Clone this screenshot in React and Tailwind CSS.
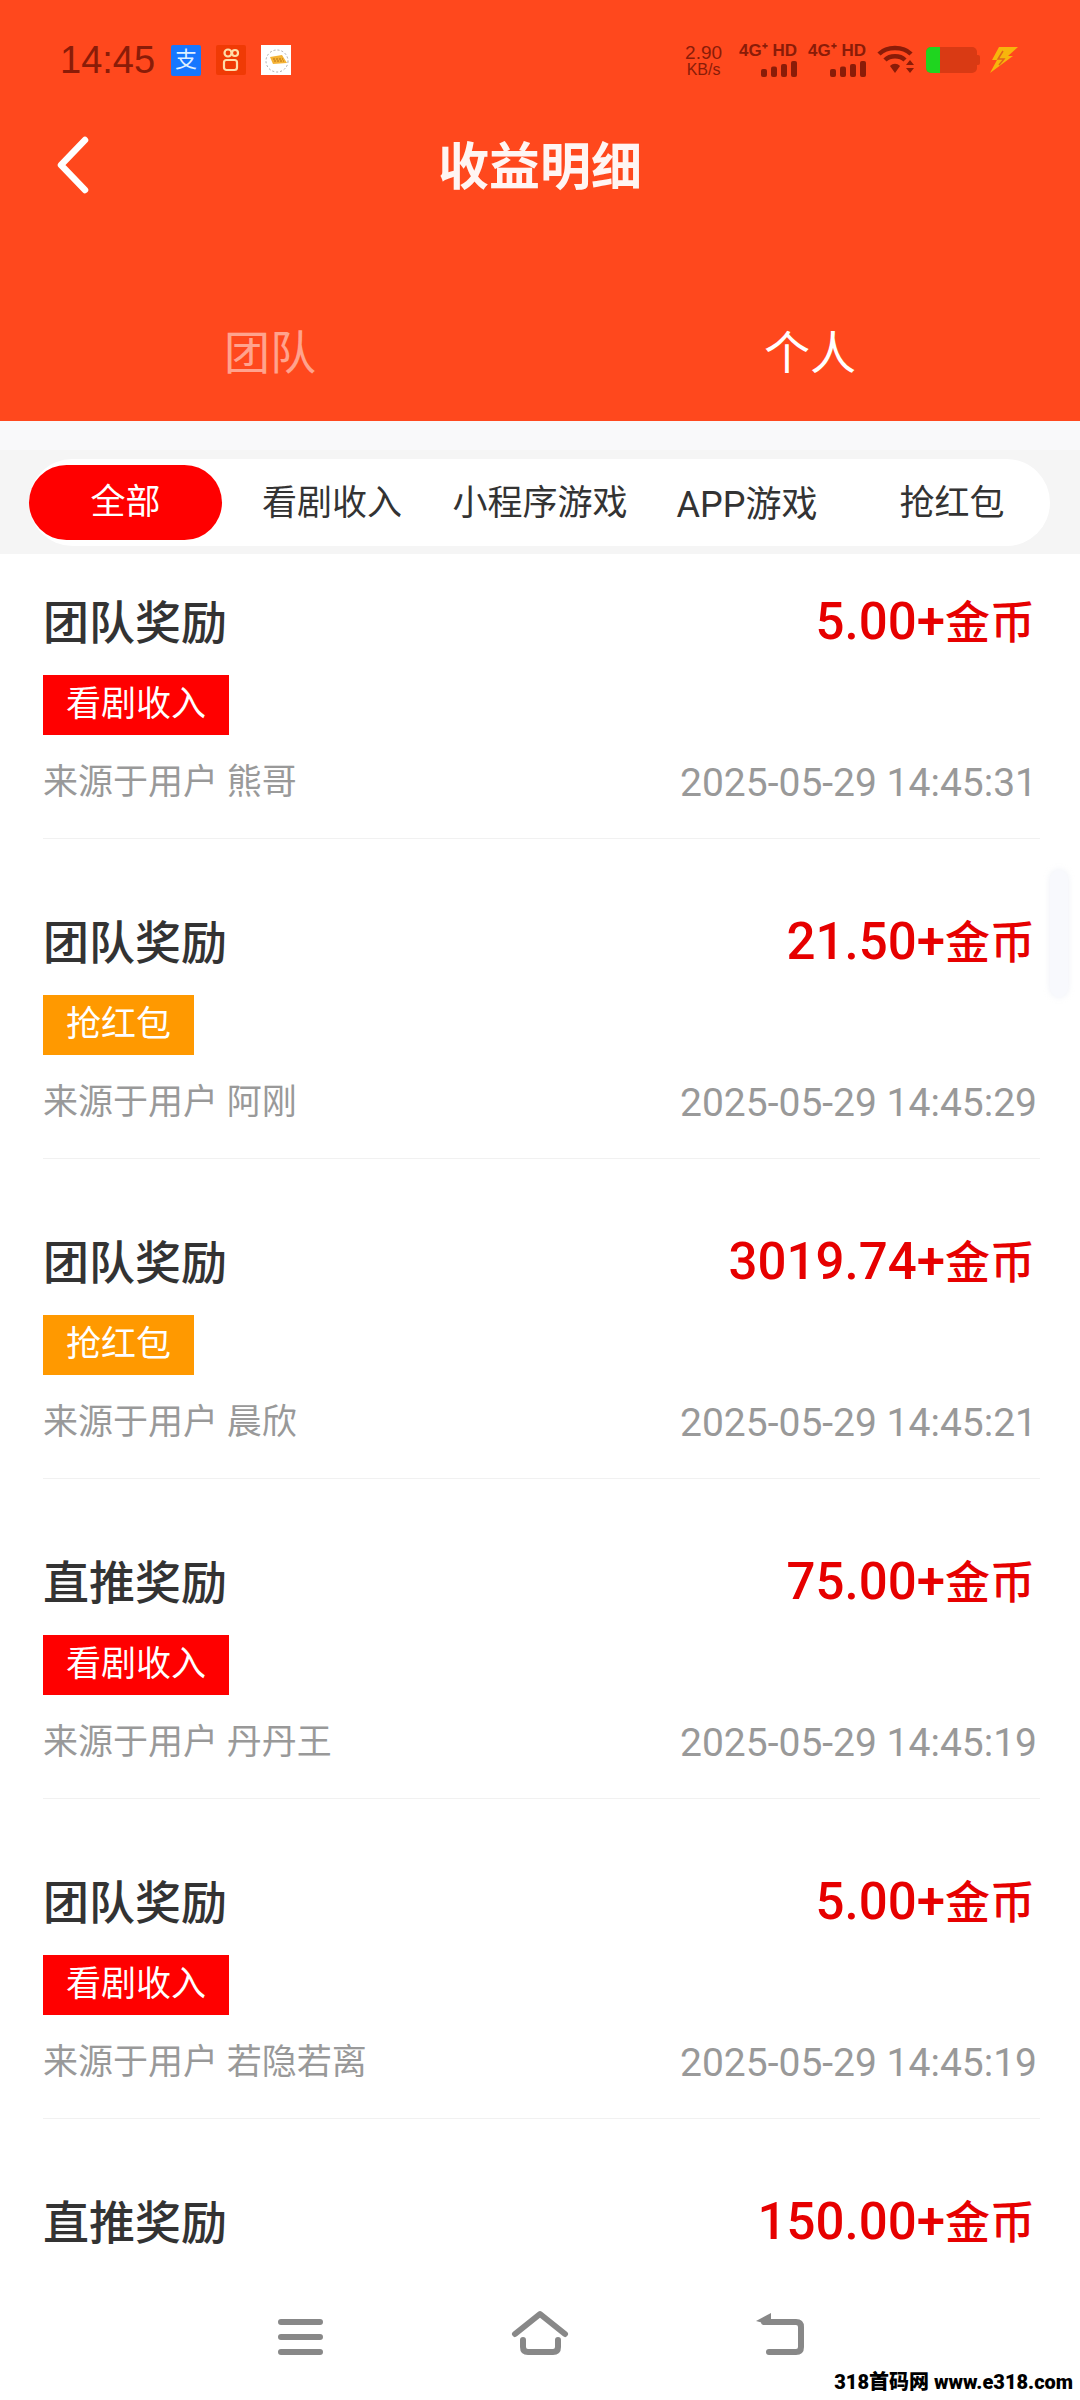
const font = { fontFamily: 'Roboto, "Noto Sans CJK SC", sans-serif' }
const statusFont = { fontFamily: '"Liberation Sans", "Noto Sans CJK SC", sans-serif' }

const rows = [
  { title: '团队奖励', amount: '5.00', tag: '看剧收入', user: '熊哥', time: '2025-05-29 14:45:31' },
  { title: '团队奖励', amount: '21.50', tag: '抢红包', user: '阿刚', time: '2025-05-29 14:45:29' },
  { title: '团队奖励', amount: '3019.74', tag: '抢红包', user: '晨欣', time: '2025-05-29 14:45:21' },
  { title: '直推奖励', amount: '75.00', tag: '看剧收入', user: '丹丹王', time: '2025-05-29 14:45:19' },
  { title: '团队奖励', amount: '5.00', tag: '看剧收入', user: '若隐若离', time: '2025-05-29 14:45:19' },
  { title: '直推奖励', amount: '150.00' },
]

function Signal() {
  return (
    <div className="flex flex-col items-end">
      <div className="text-[17px] leading-[16px] font-bold text-[#8a1c08]">4G⁺ HD</div>
      <svg width="36" height="16" viewBox="0 0 36 16" className="mt-[2px]">
        <rect x="0" y="8" width="6" height="8" rx="2" fill="#8a1c08" />
        <rect x="10" y="5.5" width="6" height="10.5" rx="2" fill="#8a1c08" />
        <rect x="20" y="3" width="6" height="13" rx="2" fill="#8a1c08" />
        <rect x="30" y="0" width="6" height="16" rx="2" fill="#8a1c08" />
      </svg>
    </div>
  )
}

function StatusBar() {
  return (
    <div className="flex h-[120px] items-center justify-between pl-[60px] pr-[61px]" style={statusFont}>
      <div className="flex items-center">
        <span className="text-[38px] leading-none text-[#8a1c08]">14:45</span>
        <div className="ml-[16px] flex h-[31px] w-[30px] items-center justify-center rounded-[2px] bg-[#1677ff] text-[22px] leading-none text-[#dff0ff]">支</div>
        <div className="ml-[15px] flex h-[30px] w-[30px] items-center justify-center rounded-[2px] bg-[#f03a05]">
          <svg width="20" height="26" viewBox="0 0 20 26" fill="none" stroke="#ffdca8" strokeWidth="2.2">
            <circle cx="7" cy="6" r="3.5" />
            <circle cx="14" cy="6" r="3" />
            <rect x="3" y="13" width="13" height="10" rx="2.5" />
          </svg>
        </div>
        <div className="ml-[15px] flex h-[30px] w-[30px] items-center justify-center bg-white">
          <svg width="28" height="28" viewBox="0 0 28 28">
            <circle cx="15" cy="15" r="11" fill="none" stroke="#aaa" strokeWidth="1" strokeDasharray="2 2" />
            <path d="M8 11 L20 9 L25 17 L11 18 Z" fill="#f5b335" />
            <path d="M11 13 H21 M12 15 H22" stroke="#b5731a" strokeWidth="1" strokeDasharray="2 1" />
          </svg>
        </div>
      </div>
      <div className="flex items-center">
        <div className="flex flex-col items-center text-[#8a1c08]">
          <span className="text-[19px] leading-[18px]">2.90</span>
          <span className="text-[16px] leading-[15px]">KB/s</span>
        </div>
        <div className="ml-[17px]"><Signal /></div>
        <div className="ml-[11px]"><Signal /></div>
        <svg width="38" height="30" viewBox="0 0 38 30" className="ml-[11px]">
          <path d="M2 9 C10 1 26 1 34 9" fill="none" stroke="#8a1c08" strokeWidth="4.5" />
          <path d="M8 15 C13 10 23 10 28 15" fill="none" stroke="#8a1c08" strokeWidth="4.5" />
          <path d="M13 21 L18 28 L23 21 C20 18 16 18 13 21 Z" fill="#8a1c08" />
          <path d="M33 15 L37 20 H29 Z M29 23 H37 L33 28 Z" fill="#8a1c08" />
        </svg>
        <div className="ml-[11px] flex items-center">
          <div className="flex h-[26px] w-[51px] overflow-hidden rounded-[5px] bg-[#d93a14]">
            <div className="h-full w-[14px] bg-[#1fd51f]" />
          </div>
          <div className="h-[10px] w-[3px] rounded-r-[2px] bg-[#d93a14]" />
        </div>
        <svg width="30" height="26" viewBox="0 0 30 26" className="ml-[9px]">
          <path d="M10 0 H29 L19 9 H24 L1 26 L8 13 H3 Z" fill="#f7b50c" />
          <path d="M14 4 L9 12 H15 L10 18" fill="none" stroke="#e0661a" strokeWidth="1.5" />
        </svg>
      </div>
    </div>
  )
}

function Row({ row }) {
  return (
    <div className="mb-[35px] ml-[43px] mr-[40px] h-[285px] border-b border-[#f1f1f1] pt-[39px] last:border-b-0">
      <div className="flex items-center justify-between">
        <span className="text-[46px] font-medium leading-[58px] text-[#333333]">{row.title}</span>
        <span className="mr-[5px] text-[45px] font-medium leading-[58px] text-[#e60000]">
          <span className="text-[51px]">{row.amount}+</span>金币
        </span>
      </div>
      {row.tag && (
        <>
          <div className={row.tag === '看剧收入' ? 'mt-[22px] inline-flex h-[60px] items-center bg-[#ff0000] px-[23px] text-[35px] text-white' : 'mt-[22px] inline-flex h-[60px] items-center bg-[#ff9900] px-[23px] text-[35px] text-white'}>
            {row.tag}
          </div>
          <div className="mt-[22px] flex items-center justify-between text-[35px] leading-[52px] text-[#999999]">
            <span>来源于用户 {row.user}</span>
            <span className="mr-[3px] text-[39px]">{row.time}</span>
          </div>
        </>
      )}
    </div>
  )
}

export default function App() {
  return (
    <div className="relative flex h-[2400px] w-[1080px] flex-col overflow-hidden bg-white" style={font}>
      <header className="h-[421px] shrink-0 bg-[#ff481d]">
        <StatusBar />
        <div className="relative flex h-[95px] items-center justify-center">
          <svg width="40" height="64" viewBox="0 0 40 64" className="absolute left-[53px] top-[13px]" fill="none" stroke="white" strokeWidth="6.5" strokeLinecap="round" strokeLinejoin="round">
            <path d="M32 7 L8 32 L32 57" />
          </svg>
          <span className="pt-[2px] text-[51px] font-bold text-white/95">收益明细</span>
        </div>
        <div className="mt-[105px] flex items-center">
          <span className="w-[540px] text-center text-[46px] leading-[66px] text-white/50">团队</span>
          <span className="w-[540px] text-center text-[46px] leading-[66px] text-white">个人</span>
        </div>
      </header>
      <div className="h-[29px] shrink-0 bg-[#f9f9fa]" />
      <div className="h-[104px] shrink-0 bg-[#f5f5f5] pl-[29px] pr-[30px] pt-[9px]">
        <div className="flex h-[87px] items-center rounded-[44px] bg-white pb-[1px] text-[35px] text-[#333333]">
          <div className="flex h-[75px] w-[193px] items-center justify-center rounded-[38px] bg-[#ff0000] pt-[3px] text-white">全部</div>
          <span className="w-[220px] pt-[5px] text-center">看剧收入</span>
          <span className="w-[196px] pt-[5px] text-center">小程序游戏</span>
          <span className="w-[218px] pt-[5px] text-center text-[36px]">APP游戏</span>
          <span className="w-[192px] pt-[5px] text-center">抢红包</span>
        </div>
      </div>
      <main className="min-h-0 flex-1 overflow-hidden">
        {rows.map((row, i) => <Row key={i} row={row} />)}
      </main>
      <div className="absolute right-[12px] top-[870px] h-[127px] w-[18px] rounded-[9px] bg-[#f8f9fd] shadow-[0_0_6px_rgba(230,232,242,0.7)]" />
      <nav className="h-[130px] shrink-0 bg-white">
        <svg width="1080" height="130" viewBox="0 0 1080 130" className="text-[#888888]">
          <g fill="none" stroke="currentColor" strokeWidth="6" strokeLinecap="round" strokeLinejoin="round">
            <path d="M281 52 H320 M281 67 H320 M281 82 H320" />
            <path d="M515 64 L540 44 L565 64" />
            <path d="M523 70 V77 Q523 82 528 82 H553 Q558 82 558 77 V70" />
            <path d="M764 52 H796 Q801 52 801 57 V77 Q801 82 796 82 H769" />
          </g>
          <path d="M756 51 L771 43 V55 Z" fill="currentColor" />
        </svg>
      </nav>
      <span className="absolute bottom-[3px] right-[7px] text-[20px] font-black text-black">318首码网 www.e318.com</span>
    </div>
  )
}
